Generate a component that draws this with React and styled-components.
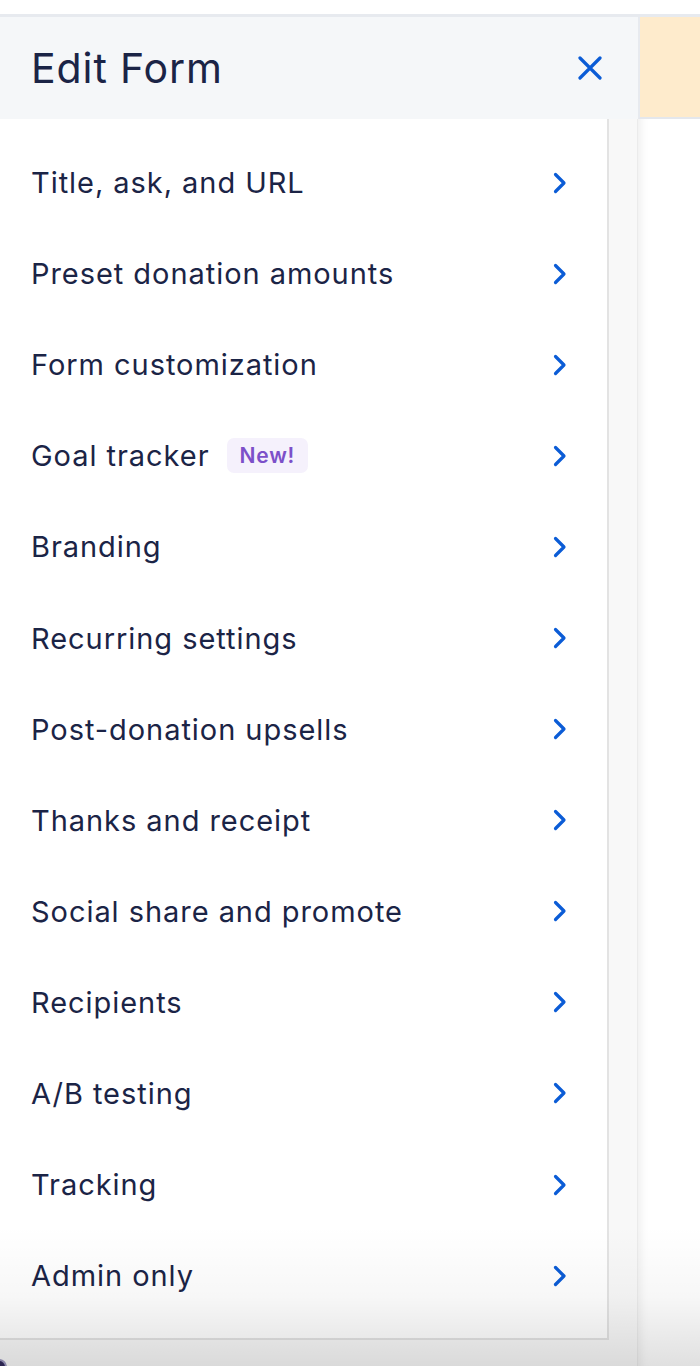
import React from "react";
import styled, { createGlobalStyle } from "styled-components";

const GlobalStyle = createGlobalStyle`
  html, body { margin: 0; padding: 0; }
  body { font-family: Inter, "Noto Sans", "Liberation Sans", sans-serif; background: #fff; }
  * { box-sizing: border-box; }
`;

const Page = styled.div`
  position: relative;
  width: 700px;
  height: 1366px;
  overflow: hidden;
  background: #fff;
  display: flex;
  flex-direction: column;
`;

const TopGap = styled.div`
  height: 17px;
  flex: none;
  border-bottom: 3px solid #e7eaef;
  background: #fff;
`;

const HeaderRow = styled.div`
  display: flex;
  height: 102px;
  flex: none;
`;

const Header = styled.header`
  width: 638px;
  flex: none;
  background: #f5f7f9;
  display: flex;
  align-items: center;
  justify-content: space-between;
  padding: 0 36px 0 31px;
`;

const Title = styled.h1`
  margin: 0;
  font-size: 41px;
  font-weight: 400;
  color: #1b2446;
  letter-spacing: 0.9px;
`;

const CloseButton = styled.button`
  border: 0;
  background: none;
  padding: 0;
  width: 24px;
  height: 24px;
  display: flex;
  cursor: pointer;
`;

const Peach = styled.div`
  flex: 1;
  background: #feebcc;
  border-left: 2px solid #e7eaef;
  border-bottom: 2px solid #e4e7ec;
`;

const BodyRow = styled.div`
  flex: 1;
  display: flex;
  min-height: 0;
`;

const LeftColumn = styled.div`
  width: 638px;
  flex: none;
  background: #f8f8f8;
  border-right: 1px solid #ebebeb;
`;

const ListPanel = styled.nav`
  width: 609px;
  background: #fff;
  border-right: 2px solid #e3e3e3;
  border-bottom: 2px solid #e3e3e3;
  padding: 18px 0 17px;
`;

const Row = styled.div`
  height: 91.1px;
  display: flex;
  align-items: center;
  justify-content: space-between;
  padding: 0 40px 0 31px;
  cursor: pointer;
`;

const Label = styled.span`
  display: flex;
  align-items: center;
  gap: 17px;
  font-size: 29px;
  color: #1b2446;
  letter-spacing: 0.95px;
`;

const Badge = styled.span`
  display: inline-flex;
  align-items: center;
  height: 35px;
  padding: 0 13px;
  border-radius: 7px;
  background: #f5f1fc;
  color: #7c50c9;
  font-size: 21px;
  font-weight: 600;
  letter-spacing: 0.8px;
`;

const RightArea = styled.div`
  flex: 1;
  background: #fff;
  box-shadow: inset 10px 0 10px -8px rgba(0, 0, 0, 0.08);
`;

const BottomShade = styled.div`
  position: absolute;
  left: 0;
  right: 0;
  bottom: 0;
  height: 140px;
  pointer-events: none;
  background: linear-gradient(to bottom, rgba(0,0,0,0) 0%, rgba(0,0,0,0.03) 50%, rgba(0,0,0,0.12) 100%);
`;

const CornerDot = styled.div`
  position: absolute;
  left: -9px;
  bottom: -9px;
  width: 16px;
  height: 16px;
  border-radius: 50%;
  border: 2px solid #8a86a8;
  background: #2b2450;
`;

const Chevron = () => (
  <svg width="14" height="22" viewBox="0 0 14 22" fill="none">
    <path d="M2.5 2.5 L11 11 L2.5 19.5" stroke="#0b5cd6" strokeWidth="3.2" strokeLinecap="round" strokeLinejoin="round" />
  </svg>
);

const CloseIcon = () => (
  <svg width="24" height="24" viewBox="0 0 24 24" fill="none">
    <path d="M2 2 L22 22 M22 2 L2 22" stroke="#0b5cd6" strokeWidth="3.2" strokeLinecap="round" />
  </svg>
);

const items = [
  { label: "Title, ask, and URL" },
  { label: "Preset donation amounts" },
  { label: "Form customization" },
  { label: "Goal tracker", badge: "New!" },
  { label: "Branding" },
  { label: "Recurring settings" },
  { label: "Post-donation upsells" },
  { label: "Thanks and receipt" },
  { label: "Social share and promote" },
  { label: "Recipients" },
  { label: "A/B testing" },
  { label: "Tracking" },
  { label: "Admin only" },
];

export default function App() {
  return (
    <>
      <GlobalStyle />
      <Page>
        <TopGap />
        <HeaderRow>
          <Header>
            <Title>Edit Form</Title>
            <CloseButton aria-label="Close">
              <CloseIcon />
            </CloseButton>
          </Header>
          <Peach />
        </HeaderRow>
        <BodyRow>
          <LeftColumn>
            <ListPanel>
              {items.map((it) => (
                <Row key={it.label}>
                  <Label>
                    {it.label}
                    {it.badge && <Badge>{it.badge}</Badge>}
                  </Label>
                  <Chevron />
                </Row>
              ))}
            </ListPanel>
          </LeftColumn>
          <RightArea />
        </BodyRow>
        <BottomShade />
        <CornerDot />
      </Page>
    </>
  );
}
